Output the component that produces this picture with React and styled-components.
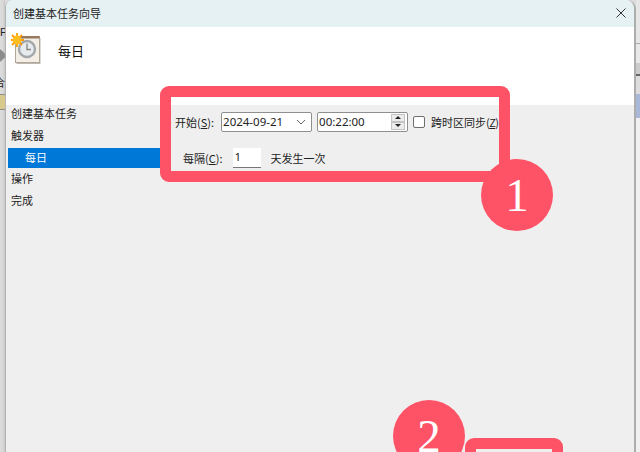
import { createGlobalStyle, styled } from "styled-components";

const Global = createGlobalStyle`
  html, body { margin: 0; padding: 0; }
  body { width: 640px; height: 452px; overflow: hidden; background: #dcdcdc; font-family: "Noto Sans CJK SC", "Liberation Sans", sans-serif; }
`;

const Red = "#fe5266";

const Desktop = styled.div`
  width: 640px;
  height: 452px;
  display: flex;
  overflow: hidden;
`;

const LeftStrip = styled.div`
  width: 5px;
  flex-shrink: 0;
  overflow: hidden;
  display: flex;
  flex-direction: column;
  align-items: flex-start;
  padding-top: 25px;
  box-sizing: border-box;
  background: linear-gradient(90deg, #dddddd 0, #d8d8d8 3px, #c6c6c6 5px);
  font-size: 11px;
  color: #222;
`;

const StripGlyph = styled.span`
  height: ${p => p.height}px;
  line-height: ${p => p.height}px;
  margin-left: ${p => p.shift || 0}px;
  white-space: nowrap;
  flex-shrink: 0;
  font-family: "Liberation Sans", "Noto Sans CJK SC", sans-serif;
`;

const Diamond = styled.span`
  width: 9px;
  height: 9px;
  margin: 12px 0 16px -4px;
  flex-shrink: 0;
  background: #8c8c8c;
  transform: rotate(45deg);
`;

const StripIcon = styled.span`
  width: 10px;
  height: 14px;
  margin: 4px 0 0 -5px;
  flex-shrink: 0;
  border-radius: 3px;
  background: #d9c98c;
  border: 1px solid #8c8c8c;
`;

const RightStrip = styled.div`
  width: 4px;
  flex-shrink: 0;
  background: linear-gradient(180deg,
    #e6e6e6 0, #e6e6e6 43px, #aaaaaa 43px, #aaaaaa 44px,
    #e8e8e8 44px, #e8e8e8 63px, #cccccc 63px, #cccccc 74px,
    #666666 74px, #666666 76px, #dddddd 76px, #dddddd 94px,
    #a9b8d8 94px, #a9b8d8 118px, #f0f0f0 118px, #f0f0f0 100%);
`;

const Dialog = styled.div`
  flex: 1;
  min-width: 0;
  display: flex;
  flex-direction: column;
  border-left: 1px solid #b4b4b4;
  border-right: 2px solid #adadad;
  border-radius: 7px 9px 0 0;
  overflow: hidden;
  position: relative;
`;

const TitleBar = styled.div`
  height: 26px;
  padding-bottom: 1px;
  flex-shrink: 0;
  background: #e6f1f3;
  font-size: 11px;
  color: #222;
  display: flex;
  align-items: center;
  justify-content: space-between;
  padding-left: 7px;
  padding-right: 8px;
`;

const CloseIcon = styled.svg`
  width: 10px;
  height: 10px;
`;

const Header = styled.div`
  height: 78px;
  box-sizing: border-box;
  flex-shrink: 0;
  background: #fff;
  display: flex;
  align-items: flex-start;
  gap: 16px;
  padding: 6px 0 0 5px;
  font-size: 13px;
  color: #111;
`;

const HeaderText = styled.span`
  margin-top: 9px;
  line-height: 18px;
`;

const Body = styled.div`
  flex: 1;
  display: flex;
  background: #efefef;
`;

const Sidebar = styled.div`
  width: 155px;
  margin: -2px 0 0 2px;
  flex-shrink: 0;
  display: flex;
  flex-direction: column;
  gap: 1.75px;
`;

const Step = styled.div`
  height: 20px;
  line-height: 20px;
  font-size: 11px;
  color: #222;
  padding-left: 3px;
`;

const ActiveStep = styled(Step)`
  color: #fff;
  background: #0078d7;
  padding-left: 17px;
  margin: 1px 0 -1px;
  line-height: 18px;
`;

const Content = styled.div`
  flex: 1;
  display: flex;
  flex-direction: column;
  gap: 15px;
  padding: 6px 0 0 12px;
  font-size: 11px;
  color: #222;
`;

const Row = styled.div`
  display: flex;
  align-items: center;
  height: 21px;
  padding-left: ${p => p.indent || 0}px;
`;

const Label = styled.span`
  margin-right: ${p => p.gap || 0}px;
  white-space: nowrap;
`;

const AccessKey = styled.span`
  letter-spacing: -0.6px;
`;

const Field = styled.div`
  height: 20px;
  width: 91px;
  flex-shrink: 0;
  box-sizing: border-box;
  background: #fff;
  border: 1px solid #8f8f8f;
  border-radius: 2px;
  display: flex;
  align-items: center;
  justify-content: space-between;
  padding: 0 2px 0 1px;
  margin-right: ${p => p.gap}px;
  font-family: "Noto Sans", sans-serif;
  font-size: 11.5px;
  color: #222;
`;

const Spin = styled.div`
  display: flex;
  flex-direction: column;
`;

const SpinButton = styled.div`
  width: 14px;
  height: 8px;
  box-sizing: border-box;
  background: #ececec;
  border: 1px solid #c4c4c4;
  display: flex;
  align-items: center;
  justify-content: center;
`;

const Check = styled.span`
  width: 12px;
  height: 12px;
  box-sizing: border-box;
  flex-shrink: 0;
  border: 1px solid #6e6e6e;
  border-radius: 2px;
  background: #fff;
  margin-right: 6px;
`;

const NumberBox = styled.div`
  width: 28px;
  height: 20px;
  box-sizing: border-box;
  flex-shrink: 0;
  background: #fff;
  border-bottom: 1px solid #777;
  padding-left: 2px;
  margin-right: 10px;
  font-family: "Noto Sans", sans-serif;
  font-size: 11.5px;
  line-height: 17px;
`;

const Callout = styled.div`
  position: absolute;
  left: ${p => p.left}px;
  top: ${p => p.top}px;
  width: ${p => p.width}px;
  height: ${p => p.height}px;
  box-sizing: border-box;
  border: 11px solid ${Red};
  border-radius: 9px;
`;

const Badge = styled.div`
  position: absolute;
  left: ${p => p.left}px;
  top: ${p => p.top}px;
  width: 72px;
  height: 72px;
  border-radius: 50%;
  background: ${Red};
  color: #fff;
  font-family: "Liberation Serif", serif;
  font-size: 47px;
  line-height: 72px;
  text-align: center;
`;

function TaskIcon() {
  return (
    <svg width="31" height="31" viewBox="0 0 31 31">
      <rect x="5.5" y="5" width="24" height="26" fill="#bdb8b0" />
      <rect x="4.5" y="3.5" width="24" height="26" fill="#f4efe6" stroke="#b0a799" />
      <rect x="4.5" y="3" width="24" height="2.5" fill="#96795e" />
      <circle cx="16" cy="16" r="8" fill="#e6ebef" stroke="#a4a8ac" strokeWidth="2.4" />
      <path d="M16 10.5V16.5H20" fill="none" stroke="#8a857c" strokeWidth="1.3" />
      <path d="M6 0V14M-1 7H13M1 2L11 12M11 2L1 12" stroke="#ff9c00" strokeWidth="1.8" />
      <circle cx="6" cy="7" r="4.4" fill="#ffbe1e" />
    </svg>
  );
}

function Chevron() {
  return (
    <svg width="10" height="6" viewBox="0 0 10 6" style={{ marginRight: 3 }}>
      <path d="M1 1L5 5L9 1" fill="none" stroke="#666" />
    </svg>
  );
}

function Arrow({ down }) {
  return (
    <svg width="6" height="3" viewBox="0 0 6 3">
      <path d={down ? "M0 0H6L3 3Z" : "M0 3H6L3 0Z"} fill="#222" />
    </svg>
  );
}

export default function App() {
  return (
    <>
      <Global />
      <Desktop>
        <LeftStrip>
          <StripGlyph height={14}>F</StripGlyph>
          <Diamond />
          <StripGlyph height={14} shift={-6}>合</StripGlyph>
          <StripIcon />
        </LeftStrip>
        <Dialog>
          <TitleBar>
            创建基本任务向导
            <CloseIcon viewBox="0 0 10 10">
              <path d="M0.5 0.5L9.5 9.5M9.5 0.5L0.5 9.5" stroke="#333" fill="none" />
            </CloseIcon>
          </TitleBar>
          <Header>
            <TaskIcon />
            <HeaderText>每日</HeaderText>
          </Header>
          <Body>
            <Sidebar>
              <Step>创建基本任务</Step>
              <Step>触发器</Step>
              <ActiveStep>每日</ActiveStep>
              <Step>操作</Step>
              <Step>完成</Step>
            </Sidebar>
            <Content>
              <Row>
                <Label gap={7}>开始(<u>S</u>):</Label>
                <Field gap={5}>2024-09-21<Chevron /></Field>
                <Field gap={5}>
                  00:22:00
                  <Spin>
                    <SpinButton><Arrow /></SpinButton>
                    <SpinButton><Arrow down /></SpinButton>
                  </Spin>
                </Field>
                <Check />
                <Label>跨时区同步<AccessKey>(<u>Z</u>)</AccessKey></Label>
              </Row>
              <Row indent={8}>
                <Label gap={10}>每隔(<u>C</u>):</Label>
                <NumberBox>1</NumberBox>
                <Label>天发生一次</Label>
              </Row>
            </Content>
          </Body>
          <Callout left={154} top={86} width={350} height={96} />
          <Badge left={475} top={159}>1</Badge>
          <Callout left={459} top={438} width={98} height={60} />
          <Badge left={387} top={400}>2</Badge>
        </Dialog>
        <RightStrip />
      </Desktop>
    </>
  );
}
